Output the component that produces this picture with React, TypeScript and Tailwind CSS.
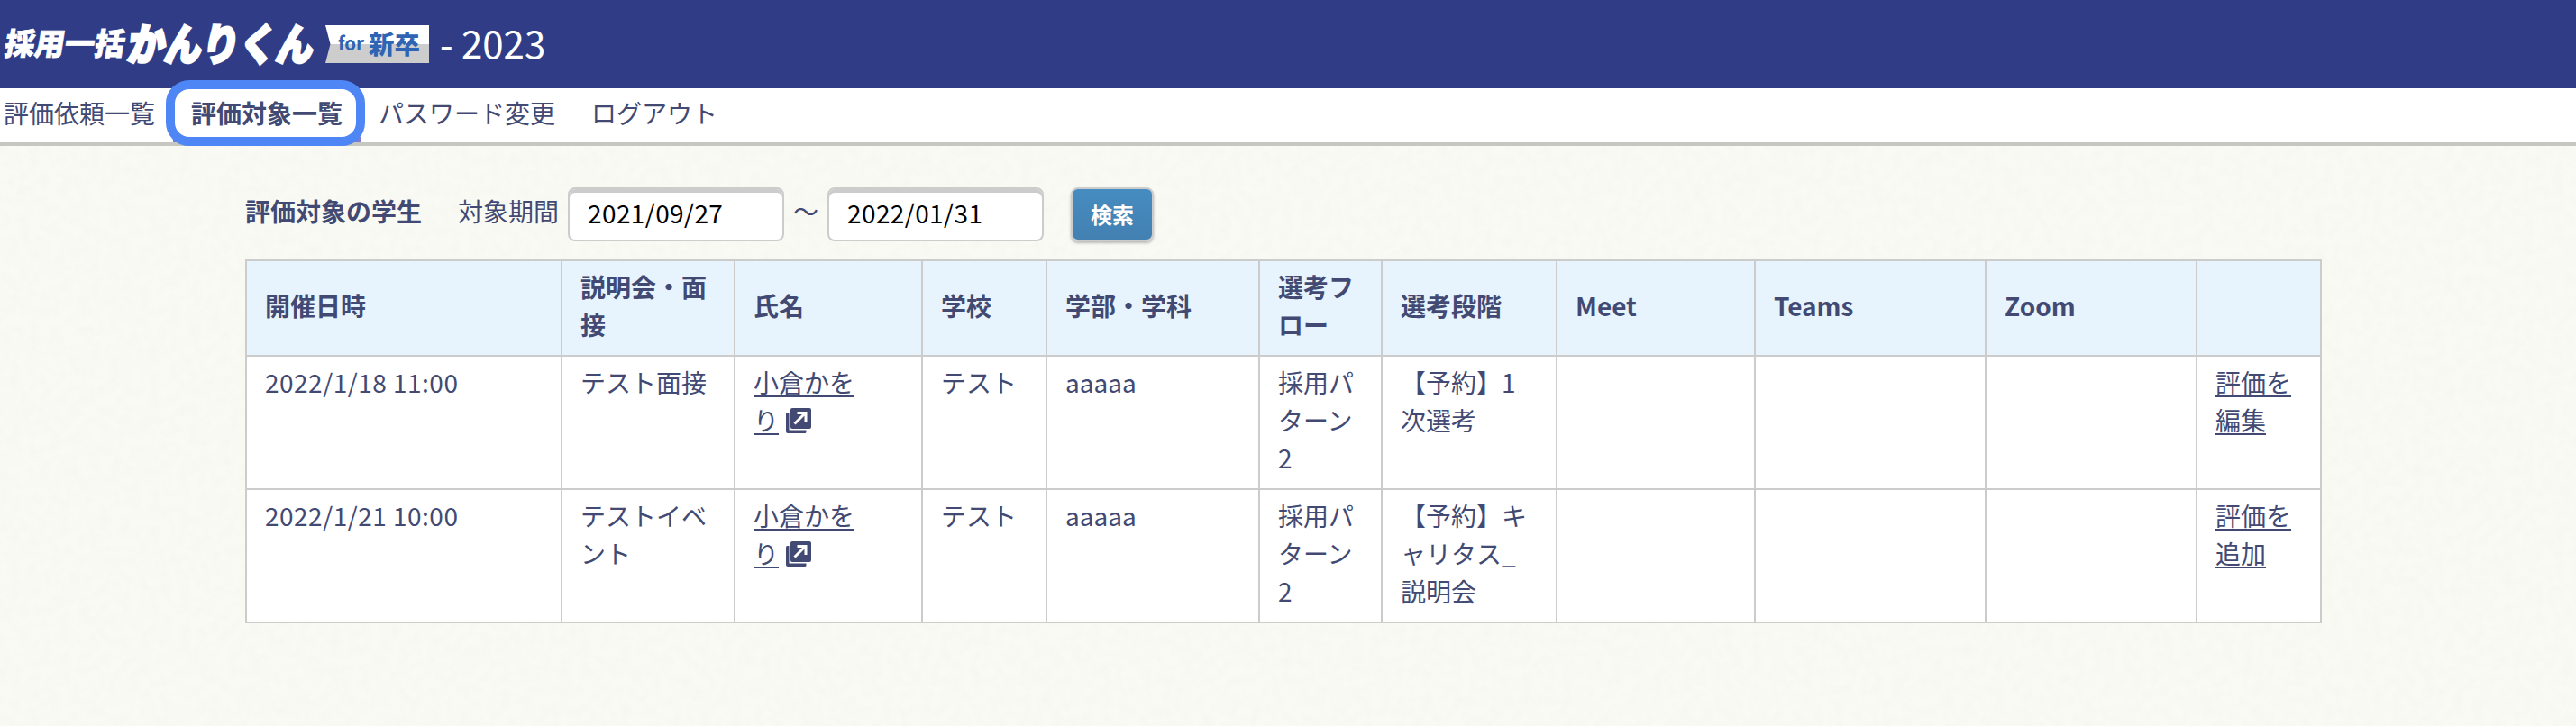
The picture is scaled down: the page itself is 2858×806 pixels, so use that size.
import { useState } from "react";

type Row = {
  date: string;
  event: string;
  name: string;
  school: string;
  department: string;
  flow: string;
  stage: string;
  action: string;
};

const NAV_ITEMS = ["評価依頼一覧", "評価対象一覧", "パスワード変更", "ログアウト"];

const COLUMNS = [
  { label: "開催日時", width: 350 },
  { label: "説明会・面接", width: 192 },
  { label: "氏名", width: 208 },
  { label: "学校", width: 138 },
  { label: "学部・学科", width: 236 },
  { label: "選考フロー", width: 136 },
  { label: "選考段階", width: 194 },
  { label: "Meet", width: 220 },
  { label: "Teams", width: 256 },
  { label: "Zoom", width: 234 },
  { label: "", width: 138 },
];

const ROWS: Row[] = [
  {
    date: "2022/1/18 11:00",
    event: "テスト面接",
    name: "小倉かをり",
    school: "テスト",
    department: "aaaaa",
    flow: "採用パターン2",
    stage: "【予約】1次選考",
    action: "評価を編集",
  },
  {
    date: "2022/1/21 10:00",
    event: "テストイベント",
    name: "小倉かをり",
    school: "テスト",
    department: "aaaaa",
    flow: "採用パターン2",
    stage: "【予約】キャリタス_説明会",
    action: "評価を追加",
  },
];

function Logo() {
  return (
    <svg width="480" height="98" viewBox="0 -28 480 98" className="block shrink-0 font-black">
      <g transform="skewX(-9)" fill="#fff" stroke="#fff">
        <text x="9" y="33" fontSize="34" strokeWidth="0.8" textLength="133" lengthAdjust="spacingAndGlyphs">
          採用一括
        </text>
        <text x="146" y="38.500" fontSize="48" strokeWidth="3" textLength="206" lengthAdjust="spacingAndGlyphs">
          かんりくん
        </text>
      </g>
      <path d="M361 0H476V21H366.500Z" fill="#fff" />
      <path d="M366.500 21H476V42H361Z" fill="#cdcdcd" />
      <text x="375" y="28" fontSize="21" fontWeight="700" fill="#2f63b3" textLength="29" lengthAdjust="spacingAndGlyphs">
        for
      </text>
      <text x="409" y="31.500" fontSize="28" fill="#2f63b3" textLength="57" lengthAdjust="spacingAndGlyphs">
        新卒
      </text>
    </svg>
  );
}

function PaperTexture() {
  return (
    <svg className="absolute inset-0 h-full w-full" aria-hidden="true">
      <filter id="paper" x="0" y="0" width="100%" height="100%">
        <feTurbulence type="fractalNoise" baseFrequency="0.09" numOctaves="3" seed="4" />
        <feColorMatrix values="0 0 0 0 0.5  0 0 0 0 0.5  0 0 0 0 0.46  0.09 0 0 0 -0.03" />
      </filter>
      <rect width="100%" height="100%" filter="url(#paper)" />
    </svg>
  );
}

function ExternalIcon() {
  return (
    <svg width="28" height="28" viewBox="0 0 28 28" className="ml-2 inline-block align-[-3px]">
      <path d="M0 6.500Q0 5 1.500 5H3.500V24.500H22.500V26.500Q22.500 28 21 28H2Q0 28 0 26Z" fill="#424a73" />
      <rect x="5" y="0" width="23" height="23" rx="2" fill="#424a73" />
      <path d="M9.500 17.500 21 6M12.500 5.500H22V15" fill="none" stroke="#fff" strokeWidth="3" />
    </svg>
  );
}

function DateInput({ value, onChange }: { value: string; onChange: (v: string) => void }) {
  return (
    <input
      type="text"
      value={value}
      onChange={(e) => onChange(e.target.value)}
      className="h-[60px] w-[240px] rounded-lg border-2 border-[#ccc] bg-white px-5 pb-1 text-[28px] tracking-[0.4px] text-black shadow-[inset_0_4px_0_#ccc] outline-none"
    />
  );
}

export default function App() {
  const [from, setFrom] = useState("2021/09/27");
  const [to, setTo] = useState("2022/01/31");

  return (
    <div className="flex h-[806px] flex-col overflow-hidden bg-[#f9faf4] font-['Noto_Sans_CJK_JP',sans-serif] text-[28px] leading-[42px] text-[#424a73]">
      <header className="flex h-[98px] shrink-0 items-center bg-[#303d86]">
        <Logo />
        <span className="ml-2 -mt-1 text-[42px] leading-none text-white">- 2023</span>
      </header>

      <nav className="z-10 flex h-16 shrink-0 border-b-4 border-[#c6c7c1] bg-white">
        {NAV_ITEMS.map((item, i) =>
          i === 1 ? (
            <a key={item} className="relative border-b-[6px] border-[#7f7bd0] px-5 pt-1.5 font-bold">
              {item}
              {/* focus ring round the current page */}
              <span className="absolute -top-[9px] -left-2 h-[73px] w-[221px] rounded-[26px] border-10 border-[#4e86f5]" />
            </a>
          ) : (
            <a key={item} className={i === 0 ? "pt-1.5 pr-5 pl-1" : "px-5 pt-1.5"}>
              {item}
            </a>
          )
        )}
      </nav>

      <main className="relative flex-1 pl-[272px]">
        <PaperTexture />
        <div className="relative pt-[46px]">
          <div className="flex h-[60px] items-center">
            <h1 className="mr-10 -mt-2 font-bold">評価対象の学生</h1>
            <span className="mr-2.5 -mt-2">対象期間</span>
            <DateInput value={from} onChange={setFrom} />
            <span className="mx-2.5 -mt-2">〜</span>
            <DateInput value={to} onChange={setTo} />
            <button className="ml-[30px] h-[60px] w-[92px] rounded-lg border-2 border-[#ccc] bg-linear-to-b from-[#468cc0] to-[#4380b2] text-2xl font-bold text-white shadow-[0_2px_3px_rgba(0,0,0,0.25)]">
              検索
            </button>
          </div>

          <table className="mt-5 w-[2304px] table-fixed border-collapse bg-white">
            <colgroup>
              {COLUMNS.map((c, i) => (
                <col key={i} style={{ width: c.width }} />
              ))}
            </colgroup>
            <thead>
              <tr className="h-[106px] bg-[#e7f4fe]">
                {COLUMNS.map((c, i) => (
                  <th key={i} className="border-2 border-[#ccc] px-5 pt-[7px] pb-[13px] text-left font-bold">
                    {c.label}
                  </th>
                ))}
              </tr>
            </thead>
            <tbody>
              {ROWS.map((row) => (
                <tr
                  key={row.date}
                  className="h-[148px] align-top [&>td]:border-2 [&>td]:border-[#ccc] [&>td]:px-5 [&>td]:pt-[7px] [&>td]:pb-[13px]"
                >
                  <td className="tracking-[0.5px]">{row.date}</td>
                  <td>{row.event}</td>
                  <td className="pr-12!">
                    <a className="underline decoration-2 underline-offset-3">{row.name}</a>
                    <ExternalIcon />
                  </td>
                  <td>{row.school}</td>
                  <td>{row.department}</td>
                  <td>{row.flow}</td>
                  <td className="[word-break:break-all] [line-break:anywhere]">{row.stage}</td>
                  <td />
                  <td />
                  <td />
                  <td>
                    <a className="underline decoration-2 underline-offset-3">{row.action}</a>
                  </td>
                </tr>
              ))}
            </tbody>
          </table>
        </div>
      </main>
    </div>
  );
}
